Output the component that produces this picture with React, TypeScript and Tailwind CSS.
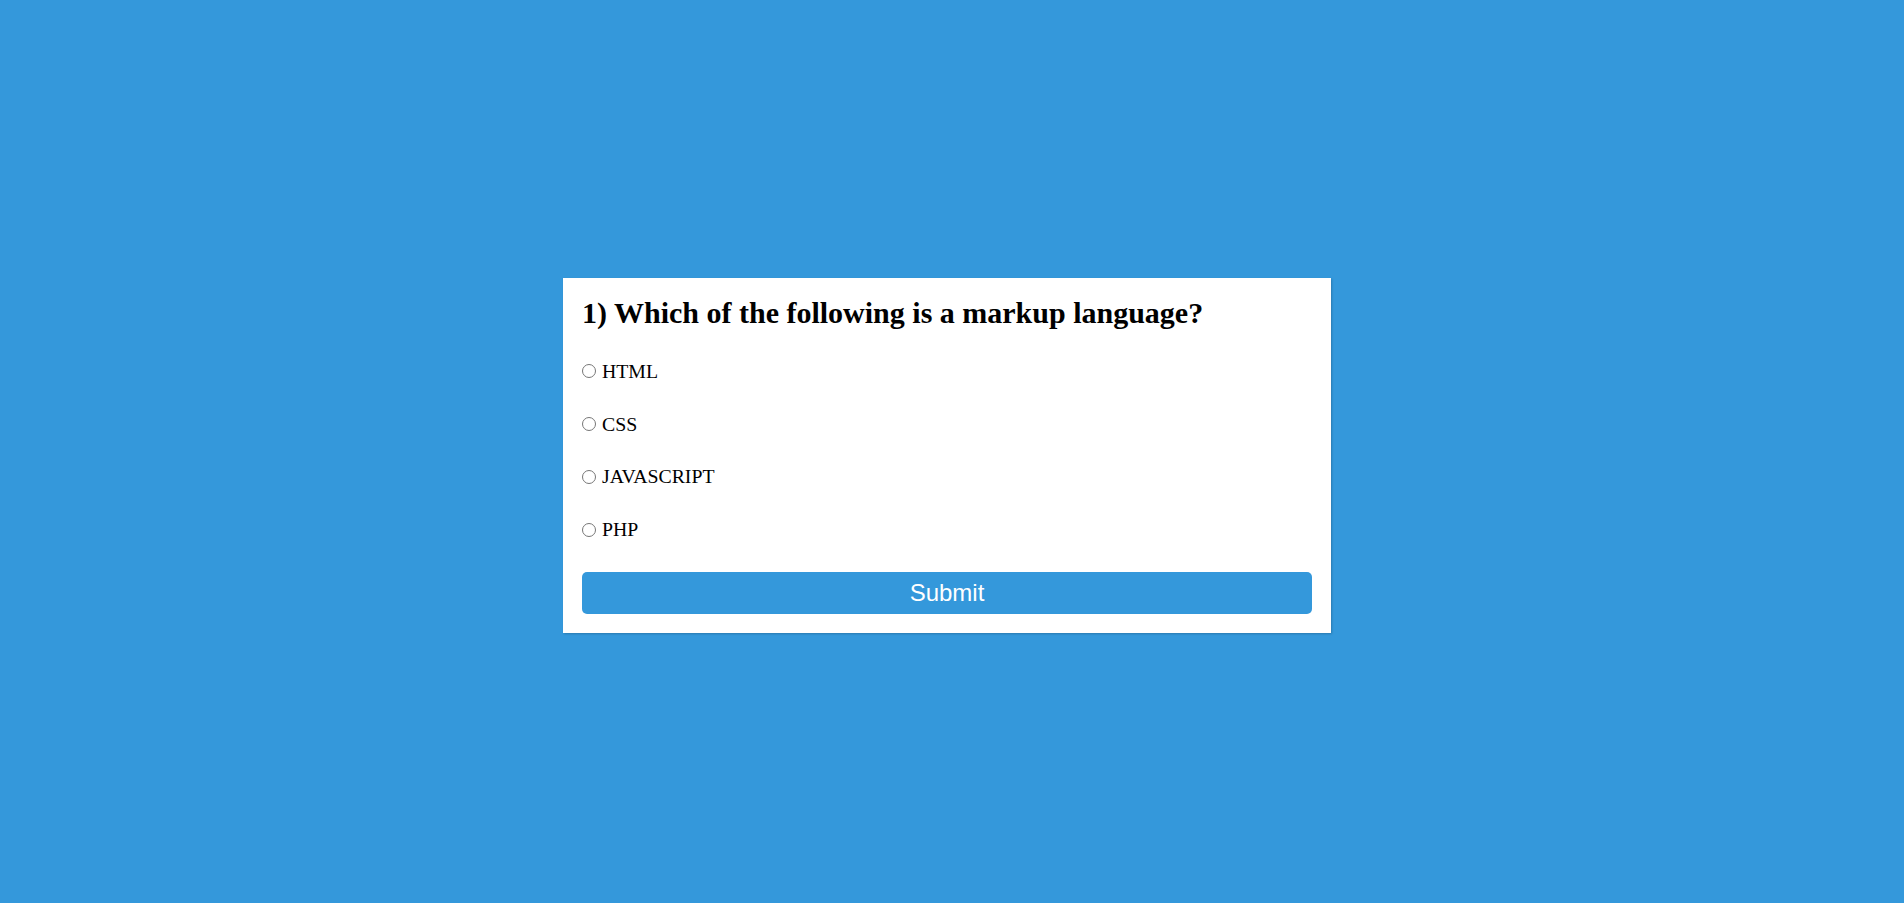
const options = ["HTML", "CSS", "JAVASCRIPT", "PHP"];

export default function App() {
  return (
    <div className="min-h-screen w-full bg-[#3498db] flex items-center justify-center pt-[8px] pr-[10px]">
      {/* Quiz card */}
      <div className="w-[768px] bg-white px-[19px] pt-[18px] pb-[19px] shadow-[1px_1px_2px_rgba(0,0,0,0.2)]">
        <h2 className="m-0 text-[30px] leading-[34px] font-bold text-black font-['Liberation_Serif',serif]">
          1) Which of the following is a markup language?
        </h2>

        <ul className="mt-[32px] flex flex-col gap-[32.8px] list-none p-0">
          {options.map((opt) => (
            <li key={opt} className="flex items-start h-[20px]">
              <input
                type="radio"
                name="answer"
                id={opt}
                className="m-0 mt-[2.5px] w-[14px] h-[14px]"
              />
              <label
                htmlFor={opt}
                className="ml-[6px] -mt-[1px] text-[19.8px] leading-[20px] text-black font-['Liberation_Serif',serif]"
              >
                {opt}
              </label>
            </li>
          ))}
        </ul>

        <button className="mt-[32px] w-full h-[42px] rounded-[5px] bg-[#3498db] text-white text-[24px] leading-none font-['Liberation_Sans',Arial,sans-serif] flex items-center justify-center cursor-pointer">
          Submit
        </button>
      </div>
    </div>
  );
}
